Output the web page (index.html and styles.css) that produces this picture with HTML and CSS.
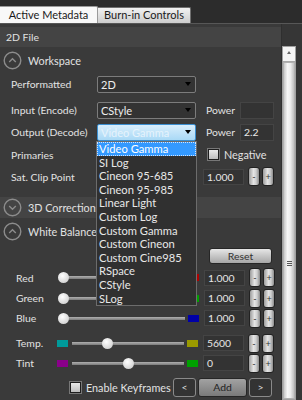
FILE: index.html
```html
<!DOCTYPE html>
<html lang="en">
<head>
    <meta charset="UTF-8">
    <title>Metadata</title>
    <link rel="stylesheet" href="styles.css">
</head>
<body>
    <div class="tabs">
        <div class="tab active">Active Metadata</div>
        <div class="tab">Burn-in Controls</div>
    </div>
    <div class="panel">
        <div class="content">
            <div class="group">2D File</div>
            <div class="section">
                <svg class="toggle" width="19" height="19" viewBox="0 0 19 19"><circle cx="9.5" cy="9.5" r="8.3" fill="none" stroke="#8c8c8c" stroke-width="1.4"/><path d="M6.2 11 L9.5 7.8 L12.8 11" fill="none" stroke="#8c8c8c" stroke-width="1.4"/></svg>
                <span>Workspace</span>
            </div>
            <div class="row r-perf">
                <div class="label">Performatted</div>
                <div class="select"><span>2D</span><i class="arrow"></i></div>
            </div>
            <div class="row r-in">
                <div class="label">Input (Encode)</div>
                <div class="select"><span>CStyle</span><i class="arrow"></i></div>
                <div class="power">Power</div>
                <div class="field small"></div>
            </div>
            <div class="row r-out">
                <div class="label">Output (Decode)</div>
                <div class="select open"><span>Video Gamma</span><i class="arrow"></i></div>
                <div class="power">Power</div>
                <div class="field small">2.2</div>
            </div>
            <div class="row r-prim">
                <div class="label">Primaries</div>
                <div class="check neg"></div>
                <span class="check-text">Negative</span>
            </div>
            <div class="row r-sat">
                <div class="label">Sat. Clip Point</div>
                <div class="field value sat">1.000</div>
                <div class="spin">-</div>
                <div class="spin">+</div>
            </div>
            <div class="section hover">
                <svg class="toggle" width="19" height="19" viewBox="0 0 19 19"><circle cx="9.5" cy="9.5" r="8.3" fill="none" stroke="#8c8c8c" stroke-width="1.4"/><path d="M6.2 8 L9.5 11.2 L12.8 8" fill="none" stroke="#8c8c8c" stroke-width="1.4"/></svg>
                <span>3D Corrections</span>
            </div>
            <div class="section wb">
                <svg class="toggle" width="19" height="19" viewBox="0 0 19 19"><circle cx="9.5" cy="9.5" r="8.3" fill="none" stroke="#8c8c8c" stroke-width="1.4"/><path d="M6.2 11 L9.5 7.8 L12.8 11" fill="none" stroke="#8c8c8c" stroke-width="1.4"/></svg>
                <span>White Balance</span>
            </div>
            <div class="row r-reset">
                <div class="btn reset">Reset</div>
            </div>
            <div class="row wbrow r-red">
                <div class="wlabel">Red</div>
                <div class="slider full"><span class="knob" style="margin-left:0px"></span></div>
                <div class="swatch" style="background:#b00000"></div>
                <div class="field value">1.000</div>
                <div class="spin">-</div>
                <div class="spin">+</div>
            </div>
            <div class="row wbrow">
                <div class="wlabel">Green</div>
                <div class="slider full"><span class="knob" style="margin-left:0px"></span></div>
                <div class="swatch" style="background:#00a000"></div>
                <div class="field value">1.000</div>
                <div class="spin">-</div>
                <div class="spin">+</div>
            </div>
            <div class="row wbrow">
                <div class="wlabel">Blue</div>
                <div class="slider full"><span class="knob" style="margin-left:0px"></span></div>
                <div class="swatch" style="background:#0000a8"></div>
                <div class="field value">1.000</div>
                <div class="spin">-</div>
                <div class="spin">+</div>
            </div>
            <div class="row wbrow r-temp">
                <div class="wlabel">Temp.</div>
                <div class="swatch left" style="background:#009a9a"></div>
                <div class="slider"><span class="knob" style="margin-left:30px"></span></div>
                <div class="swatch" style="background:#9a9a00"></div>
                <div class="field value">5600</div>
                <div class="spin">-</div>
                <div class="spin">+</div>
            </div>
            <div class="row wbrow">
                <div class="wlabel">Tint</div>
                <div class="swatch left" style="background:#8a008a"></div>
                <div class="slider"><span class="knob" style="margin-left:51px"></span></div>
                <div class="swatch" style="background:#00a000"></div>
                <div class="field value">0</div>
                <div class="spin">-</div>
                <div class="spin">+</div>
            </div>
            <div class="row r-keys">
                <div class="check keys"></div>
                <span class="check-text">Enable Keyframes</span>
                <div class="btn dark prev">&lt;</div>
                <div class="btn add">Add</div>
                <div class="btn dark">&gt;</div>
            </div>
        </div>
        <div class="side">
            <div class="scrollbar">
                <div class="sb-up"><i></i></div>
                <div class="sb-thumb"><div class="grip"><b></b><b></b><b></b></div></div>
            </div>
        </div>
    </div>
    <ul class="dropdown">
        <li class="sel">Video Gamma</li>
        <li>SI Log</li>
        <li>Cineon 95-685</li>
        <li>Cineon 95-985</li>
        <li>Linear Light</li>
        <li>Custom Log</li>
        <li>Custom Gamma</li>
        <li>Custom Cineon</li>
        <li>Custom Cine985</li>
        <li>RSpace</li>
        <li>CStyle</li>
        <li>SLog</li>
    </ul>
</body>
</html>
```

FILE: styles.css
```css
*{
    margin: 0;
    padding: 0;
    box-sizing: border-box;
}
body{
    position: relative;
    width: 302px;
    height: 400px;
    overflow: hidden;
    background: #2c2c2c;
    color: #e2e2e2;
    font: 10.4px Lato, "Liberation Sans", sans-serif;
}
.tabs{
    display: flex;
    align-items: flex-end;
    height: 23px;
    font-size: 11px;
}
.tab{
    width: 93px;
    height: 16px;
    line-height: 14px;
    text-align: center;
    color: #1a1a1a;
    background: linear-gradient(#f2f2f2, #cdcdcd);
    border: 1px solid #707070;
    border-left: none;
    border-bottom: none;
    border-radius: 0 2px 0 0;
}
.tab.active{
    width: 98px;
    height: 17px;
    line-height: 15px;
    background: #f8f8f8;
    border-color: #9a9a9a;
}
.panel{
    display: flex;
    height: 377px;
    border-top: 1px solid #575757;
    background: #3a3a3a;
}
.content{
    width: 282px;
    border-right: 1px solid #2f2f2f;
}
.group{
    height: 20px;
    margin-top: 3px;
    padding-left: 6px;
    line-height: 20px;
    background: #444;
}
.section{
    display: flex;
    align-items: center;
    height: 21px;
    margin-top: 3px;
    padding-left: 3px;
}
.section span{
    margin-left: 6px;
    font-size: 10.8px;
}
.section.hover{
    margin-top: 10px;
    background: #444;
}
.section.wb{
    margin-top: 3px;
}
.row{
    display: flex;
    align-items: center;
    height: 22px;
}
.r-perf{
    margin-top: 2px;
}
.r-in{
    margin-top: 4px;
}
.r-prim{
    height: 23px;
}
.r-sat{
    height: 21px;
}
.label{
    width: 97px;
    padding-left: 11px;
    flex-shrink: 0;
}
.select{
    display: flex;
    align-items: center;
    justify-content: space-between;
    width: 99px;
    height: 17px;
    padding: 0 4px 0 3px;
    background: #333;
    border: 1px solid #7c7c7c;
    border-radius: 2px;
    color: #eee;
    font-size: 11px;
}
.select.open{
    background: linear-gradient(#d9eefc, #a9d9f6);
    border-color: #3c8fd0;
    color: #e6f3fc;
}
.arrow{
    width: 0;
    height: 0;
    border-left: 3.5px solid transparent;
    border-right: 3.5px solid transparent;
    border-top: 4px solid #000;
}
.power{
    width: 34px;
    margin-left: 10px;
}
.field{
    height: 16px;
    padding-left: 3px;
    line-height: 15px;
    background: #333;
    border: 1px solid #444;
    color: #e8e8e8;
}
.field.small{
    width: 34px;
    height: 17px;
}
.field.value{
    width: 41px;
    margin-left: 5px;
}
.field.sat{
    margin-left: 106px;
}
.spin{
    width: 12px;
    height: 19px;
    margin-left: 4px;
    text-align: center;
    line-height: 17px;
    font-size: 9px;
    color: #333;
    background: linear-gradient(90deg, #9c9c9c, #e4e4e4 45%, #cfcfcf 70%, #8c8c8c);
    border: 1px solid #222;
    border-radius: 3px;
}
.spin + .spin{
    margin-left: 2px;
}
.check{
    width: 11px;
    height: 11px;
    background: linear-gradient(#e8e8e8, #bdbdbd);
    border: 1px solid #1e1e1e;
    box-shadow: 0 0 0 1px #777;
}
.check.neg{
    margin-left: 111px;
}
.check-text{
    margin-left: 5px;
    font-size: 10.8px;
}
.r-reset{
    justify-content: flex-end;
    height: 22px;
    margin-top: 3px;
    padding-right: 9px;
}
.btn{
    height: 19px;
    line-height: 17px;
    text-align: center;
    border-radius: 3px;
}
.reset{
    width: 63px;
    height: 16px;
    line-height: 14px;
    color: #333;
    background: linear-gradient(#e6e6e6, #a6a6a6);
    border: 1px solid #262626;
}
.wbrow{
    height: 20px;
}
.r-red{
    height: 21px;
}
.r-temp{
    margin-top: 5px;
}
.wlabel{
    width: 57px;
    padding-left: 16px;
    flex-shrink: 0;
}
.slider{
    display: flex;
    align-items: center;
    width: 112px;
    height: 11px;
    margin-left: 4px;
    background: linear-gradient(#b0b0b0, #7a7a7a) no-repeat 0 center / 100% 3px;
}
.slider.full{
    width: 127px;
    margin-left: 1px;
    background-position: 6px center;
    background-size: calc(100% - 6px) 3px;
}
.knob{
    width: 11px;
    height: 11px;
    border-radius: 50%;
    background: radial-gradient(circle at 40% 35%, #fff, #d6d6d6 70%, #b5b5b5);
}
.swatch{
    width: 11px;
    height: 7px;
    margin-left: 3px;
}
.swatch.left{
    margin-left: 0;
}
.r-keys{
    height: 21px;
    margin-top: 4px;
    padding-right: 9px;
}
.check.keys{
    margin-left: 70px;
}
.btn.dark{
    width: 23px;
    color: #ddd;
    background: #333;
    border: 1px solid #8a8a8a;
}
.prev{
    margin-left: auto;
}
.add{
    width: 49px;
    margin: 0 2px;
    color: #222;
    background: linear-gradient(#a2a2a2, #7a7a7a);
    border: 1px solid #262626;
}
.side{
    flex: 1;
    background: #363636;
}
.scrollbar{
    display: flex;
    flex-direction: column;
    width: 14px;
    height: 354px;
    margin-top: 22px;
    border: 1px solid #a0a0a0;
    background: #e0e0e0;
}
.sb-up{
    display: flex;
    justify-content: center;
    height: 15px;
    padding-top: 4px;
    background: #f4f4f4;
    border-bottom: 1px solid #a8a8a8;
}
.sb-up i{
    width: 0;
    height: 0;
    border-left: 2.5px solid transparent;
    border-right: 2.5px solid transparent;
    border-bottom: 3px solid #666;
}
.sb-thumb{
    flex: 1;
    display: flex;
    justify-content: center;
    border: 1px solid #b0b0b0;
    background: linear-gradient(90deg, #c8c8c8, #f6f6f6 35%, #ececec 65%, #c0c0c0);
}
.grip{
    margin-top: 198px;
}
.grip b{
    display: block;
    width: 5px;
    height: 1px;
    margin-bottom: 1px;
    background: #555;
}
.dropdown{
    position: absolute;
    left: 96px;
    top: 141px;
    width: 101px;
    list-style: none;
    background: #303030;
    border: 1px solid #6c6c6c;
}
.dropdown li{
    height: 13.6px;
    line-height: 13px;
    padding-left: 2px;
    color: #e8e8e8;
    font-size: 11.2px;
}
.dropdown li.sel{
    background: #3399ff;
    color: #fff;
    outline: 1px dotted #cfe4ff;
    outline-offset: -1px;
}
```
